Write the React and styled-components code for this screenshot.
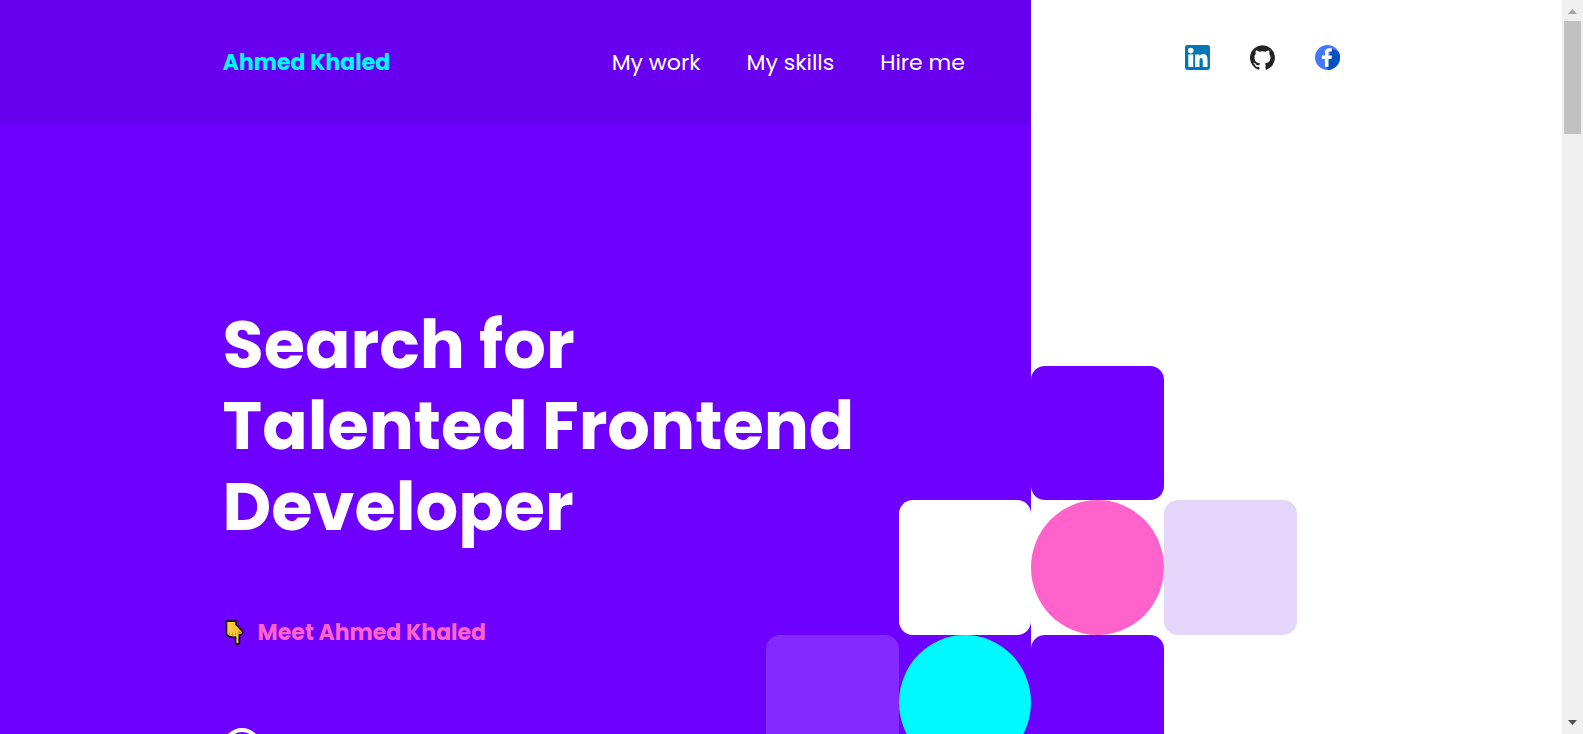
import React from "react";
import styled, { createGlobalStyle } from "styled-components";

const GlobalStyle = createGlobalStyle`
  *, *::before, *::after { box-sizing: border-box; }
  body {
    margin: 0;
    background: #ffffff;
    font-family: Poppins, Inter, "Open Sans", sans-serif;
  }
`;

const Shell = styled.div`
  display: flex;
  height: 100vh;
`;

const Page = styled.main`
  flex: 1;
  min-width: 0;
  overflow-x: hidden;
  overflow-y: auto;
  scrollbar-width: none;
  background: linear-gradient(to right, #6d00ff 66%, #ffffff 66%);
`;

const Header = styled.header`
  display: grid;
  grid-template-columns: 66fr 34fr;
  height: 124px;
`;

const Bar = styled.div`
  display: flex;
  align-items: center;
  justify-content: space-between;
  padding: 2px 66px 0 21.6%;
  background: #6600ee;
`;

const Brand = styled.a`
  color: #00f8ff;
  font-size: 22px;
  font-weight: 700;
  line-height: 32px;
  text-decoration: none;
  white-space: nowrap;
`;

const Nav = styled.nav`
  display: flex;
  gap: 46px;
`;

const NavLink = styled.a`
  color: #ffffff;
  font-size: 22px;
  line-height: 32px;
  text-decoration: none;
  white-space: nowrap;
`;

const Socials = styled.div`
  display: flex;
  justify-content: flex-end;
  gap: 40px;
  padding: 45px 41.8% 0 0;
`;

const SocialLink = styled.a`
  display: block;
  width: 25px;
  height: 25px;

  svg {
    display: block;
    width: 100%;
    height: 100%;
  }
`;

const Hero = styled.section`
  position: relative;
  min-height: 780px;
  padding: 180px 0 0 14.25%;
`;

const Title = styled.h1`
  margin: 0;
  color: #ffffff;
  font-size: 67px;
  font-weight: 700;
  line-height: 81px;
`;

const Meet = styled.a`
  display: flex;
  align-items: center;
  gap: 12px;
  width: max-content;
  margin-top: 70px;
  color: #ff63cb;
  font-size: 22px;
  font-weight: 700;
  line-height: 32px;
  text-decoration: none;
`;

const ScrollDown = styled.button`
  display: block;
  width: 38px;
  height: 38px;
  margin-top: 79px;
  padding: 4px;
  border: 4px solid #ffffff;
  border-radius: 50%;
  background: none;
  color: #ffffff;
`;

const Mosaic = styled.div`
  position: absolute;
  top: 242px;
  left: 49.05%;
  display: grid;
  grid-template-columns: 133px 132px 133px 133px;
  grid-template-rows: 134px 135px 135px;
`;

const Tile = styled.div`
  grid-column: ${(p) => p.$col};
  grid-row: ${(p) => p.$row};
  border-radius: ${(p) => (p.$round ? "50%" : "14px")};
  background: ${(p) => p.$color};
`;

const ScrollTrack = styled.div`
  display: flex;
  flex: 0 0 21px;
  flex-direction: column;
  align-items: center;
  background: #f0f0f0;
`;

const ScrollArrow = styled.svg`
  display: block;
  flex: none;
  width: 21px;
  height: 21px;
`;

const ScrollThumb = styled.div`
  width: 17px;
  height: 113px;
  margin-bottom: auto;
  background: #c1c1c1;
`;

const tiles = [
  { col: 3, row: 1, color: "#6d00ff" },
  { col: 3, row: 2, color: "#ff63cb", round: true },
  { col: 2, row: 2, color: "#ffffff" },
  { col: 4, row: 2, color: "#e4d5fa" },
  { col: 1, row: 3, color: "#8429ff" },
  { col: 2, row: 3, color: "#00f8ff", round: true },
  { col: 3, row: 3, color: "#6d00ff" },
];

const LinkedInIcon = () => (
  <svg viewBox="0 0 25 25" aria-hidden="true">
    <rect width="25" height="25" rx="2.4" fill="#0077b7" />
    <circle cx="5.7" cy="5.6" r="2.8" fill="#fff" />
    <path
      fill="#fff"
      d="M3.3 9.500h4.900v12.400h-4.900zM10.100 9.500h4.400v1.700c.7-1.200 2-2.100 3.700-2.100 3.400 0 4.300 2.400 4.300 5.800v7h-4.700v-6c0-1.500-.2-3-1.600-3s-1.700 1.400-1.700 3v6h-4.400z"
    />
  </svg>
);

const GitHubIcon = () => (
  <svg viewBox="0 0 24 24" aria-hidden="true">
    <path
      fill="#222222"
      d="M12 .3a12 12 0 0 0-3.8 23.38c.6.12.83-.26.83-.57L9 21.07c-3.34.72-4.04-1.61-4.04-1.61-.55-1.39-1.34-1.76-1.34-1.76-1.08-.74.09-.73.09-.73 1.2.09 1.83 1.24 1.83 1.24 1.08 1.83 2.81 1.3 3.5 1 .1-.78.42-1.31.76-1.61-2.67-.3-5.47-1.33-5.47-5.93 0-1.31.47-2.38 1.24-3.22-.14-.3-.54-1.52.1-3.18 0 0 1-.32 3.3 1.23a11.5 11.5 0 0 1 6 0c2.28-1.55 3.29-1.23 3.29-1.23.64 1.66.24 2.88.12 3.18a4.65 4.65 0 0 1 1.23 3.22c0 4.61-2.8 5.63-5.48 5.92.42.36.81 1.1.81 2.22l-.01 3.29c0 .31.2.69.82.57A12 12 0 0 0 12 .3"
    />
  </svg>
);

const FacebookIcon = () => (
  <svg viewBox="0 0 25 25" aria-hidden="true">
    <circle cx="12.5" cy="12.5" r="12.5" fill="#4478ff" />
    <path fill="#0151c2" d="M16.700 3.600L23.600 6.800A12.500 12.500 0 0 1 13.500 25L11 21.500z" />
    <path
      fill="#fff"
      d="M16.800 6.600V3.300h-2.400c-3.200 0-4.500 1.900-4.500 4.500v2.800H6.900v3.400h3v7.900h3.600V14h3l.4-3.400h-3.400V8.100c0-1 .5-1.500 1.400-1.500z"
    />
  </svg>
);

const HandIcon = () => (
  <svg width="23" height="26" viewBox="0 0 23 26" aria-hidden="true">
    <path
      fill="#ffc83d"
      stroke="#1c1726"
      strokeWidth="1.8"
      strokeLinejoin="round"
      d="M3.400 1h9.600v3.400l6.200 6.600c1.200 1.500.4 3.300-1.500 3.700l-1.400.3v7.200c0 2.700-3.800 2.700-3.800 0v-5c-3.400.5-6.600-.4-9.100-2.500z"
    />
    <path fill="#f08b00" d="M15.700 9.900l2.500 2.400c.3.900-.2 1.400-1 1.500l-2.200.2z" />
    <path stroke="#e29016" fill="none" d="M6.500 12.500v3M9.500 12.700v3.400M12.500 12.700v3" />
  </svg>
);

const ArrowDownIcon = () => (
  <svg width="22" height="22" viewBox="0 0 22 22" aria-hidden="true">
    <path d="M11 4v13M5 11l6 6 6-6" fill="none" stroke="currentColor" strokeWidth="3" />
  </svg>
);

export default function App() {
  return (
    <>
      <GlobalStyle />
      <Shell>
        <Page>
          <Header>
            <Bar>
              <Brand href="#home">Ahmed Khaled</Brand>
              <Nav aria-label="Main">
                <NavLink href="#work">My work</NavLink>
                <NavLink href="#skills">My skills</NavLink>
                <NavLink href="#hire">Hire me</NavLink>
              </Nav>
            </Bar>
            <Socials>
              <SocialLink href="#linkedin" aria-label="LinkedIn"><LinkedInIcon /></SocialLink>
              <SocialLink href="#github" aria-label="GitHub"><GitHubIcon /></SocialLink>
              <SocialLink href="#facebook" aria-label="Facebook"><FacebookIcon /></SocialLink>
            </Socials>
          </Header>
          <Hero>
            <Mosaic aria-hidden="true">
              {tiles.map((t) => (
                <Tile
                  key={`${t.col}-${t.row}`}
                  $col={t.col}
                  $row={t.row}
                  $color={t.color}
                  $round={t.round}
                />
              ))}
            </Mosaic>
            <Title>
              Search for
              <br />
              Talented Frontend
              <br />
              Developer
            </Title>
            <Meet href="#about">
              <HandIcon />
              Meet Ahmed Khaled
            </Meet>
            <ScrollDown type="button" aria-label="Scroll down"><ArrowDownIcon /></ScrollDown>
          </Hero>
        </Page>
        <ScrollTrack aria-hidden="true">
          <ScrollArrow viewBox="0 0 21 21"><path d="M6 14l4.500-5L15 14z" fill="#a3a3a3" /></ScrollArrow>
          <ScrollThumb />
          <ScrollArrow viewBox="0 0 21 21"><path d="M6 7l4.500 5L15 7z" fill="#505050" /></ScrollArrow>
        </ScrollTrack>
      </Shell>
    </>
  );
}
